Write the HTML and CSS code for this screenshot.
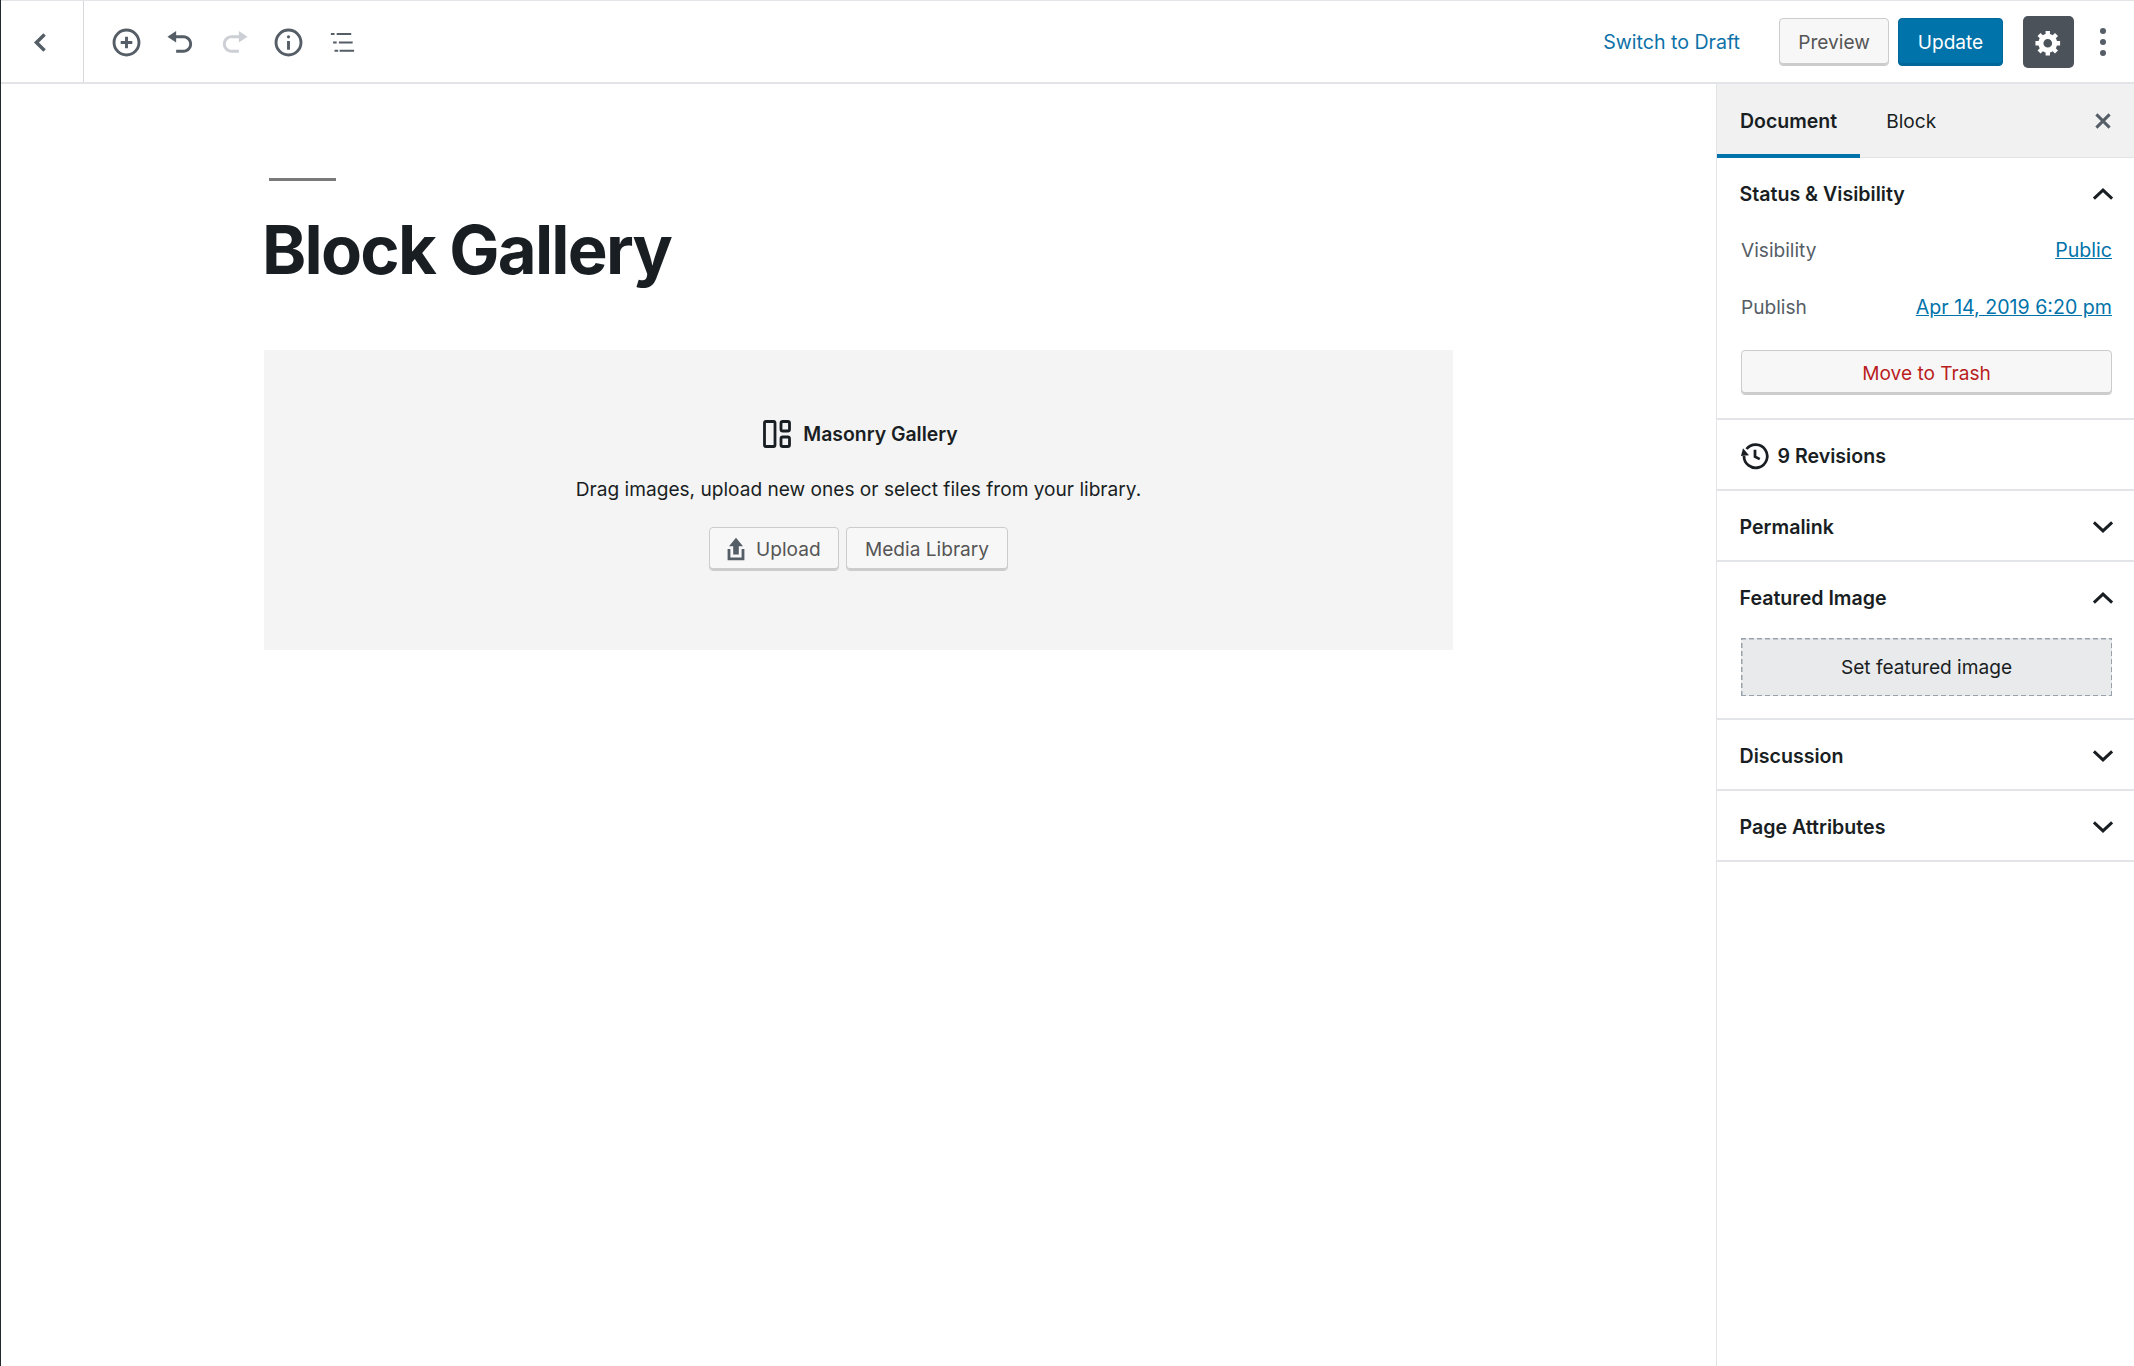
FILE: index.html
```html
<!DOCTYPE html>
<html lang="en">
<head>
<meta charset="utf-8">
<title>Block Gallery</title>
<link rel="stylesheet" href="styles.css">
</head>
<body>
<div class="app">
  <header class="topbar">
    <div class="back-cell">
      <svg class="icon" viewBox="0 0 20 20"><path class="stroke stroke-back" d="M12.800 4.500 7.200 10l5.600 5.500"/></svg>
    </div>
    <div class="tools">
      <span class="tool"><svg class="icon" viewBox="0 0 20 20"><circle class="stroke" cx="10" cy="10" r="8.600"/><path class="stroke" d="M10 6v8M6 10h8"/></svg></span>
      <span class="tool"><svg class="icon" viewBox="0 0 20 20"><path d="M12 5H7V2L1 6l6 4V7h5c2.200 0 4 1.800 4 4s-1.800 4-4 4H7v2h5c3.300 0 6-2.700 6-6s-2.700-6-6-6z"/></svg></span>
      <span class="tool tool-off"><svg class="icon" viewBox="0 0 20 20"><path d="M8 5h5V2l6 4-6 4V7H8c-2.200 0-4 1.800-4 4s1.800 4 4 4h5v2H8c-3.300 0-6-2.700-6-6s2.700-6 6-6z"/></svg></span>
      <span class="tool"><svg class="icon" viewBox="0 0 20 20"><circle class="stroke" cx="10" cy="10" r="8.600"/><path d="M9 9h2v6H9zM10 5a1.100 1.100 0 1 1 0 2.200A1.100 1.100 0 0 1 10 5z"/></svg></span>
      <span class="tool"><svg class="icon" viewBox="0 0 20 20"><path d="M2 3.500h2.500v1.400H2zM6 3.500h10v1.400H6zM3.500 9.300H6v1.400H3.500zM7.500 9.300h9.500v1.400H7.500zM4.500 15h2.500v1.400H4.500zM8 15h10v1.400H8z"/></svg></span>
    </div>
    <div class="actions">
      <a class="draft">Switch to Draft</a>
      <button class="btn btn-preview">Preview</button>
      <button class="btn btn-update">Update</button>
      <span class="gear"><svg class="gear-icon" viewBox="0 0 20 20"><path d="M18 12h-2.180c-.17.7-.44 1.350-.81 1.930l1.540 1.540-2.100 2.100-1.540-1.540c-.58.36-1.230.63-1.910.79V19H8v-2.180c-.68-.16-1.330-.43-1.910-.79l-1.540 1.540-2.120-2.120 1.540-1.540c-.36-.58-.63-1.230-.79-1.910H1V9.030h2.170c.16-.7.44-1.350.8-1.940L2.430 5.550l2.100-2.100 1.540 1.540c.58-.37 1.240-.64 1.930-.81V2h3v2.180c.68.16 1.330.43 1.910.79l1.540-1.540 2.120 2.120-1.540 1.540c.36.59.64 1.240.8 1.940H18V12zm-8.500 1.500c1.660 0 3-1.340 3-3s-1.340-3-3-3-3 1.340-3 3 1.340 3 3 3z" fill-rule="evenodd"/></svg></span>
      <span class="dots"><i></i><i></i><i></i></span>
    </div>
  </header>
  <div class="workspace">
    <main class="editor">
      <div class="post">
        <div class="title-rule"></div>
        <h1 class="title">Block Gallery</h1>
        <section class="placeholder">
          <div class="ph-head">
            <svg class="ph-icon" viewBox="0 0 28 28"><rect x="1.500" y="1.500" width="10.500" height="25" rx="1.500"/><rect x="18" y="1.500" width="8.500" height="9.500" rx="1.800"/><rect x="18" y="17" width="8.500" height="9.500" rx="1.800"/></svg>
            <span>Masonry Gallery</span>
          </div>
          <p class="ph-text">Drag images, upload new ones or select files from your library.</p>
          <div class="ph-buttons">
            <button class="btn btn-light btn-upload"><svg class="upload-icon" viewBox="0 0 20 20"><path d="M8 14V8H5l5-6 5 6h-3v6H8zm-4-4h2v6h8v-6h2v8H4z"/></svg>Upload</button>
            <button class="btn btn-light btn-media">Media Library</button>
          </div>
        </section>
      </div>
    </main>
    <aside class="sidebar">
      <div class="tabs">
        <span class="tab tab-active">Document</span>
        <span class="tab">Block</span>
        <svg class="close" viewBox="0 0 20 20"><path d="M4.500 4.500l11 11M15.500 4.500l-11 11"/></svg>
      </div>
      <section class="panel panel-status">
        <div class="panel-head"><span>Status &amp; Visibility</span><svg class="chev" viewBox="0 0 20 20"><path d="M3 13.500 10 7l7 6.500"/></svg></div>
        <div class="row row-first"><span class="row-label">Visibility</span><a class="row-link">Public</a></div>
        <div class="row"><span class="row-label">Publish</span><a class="row-link">Apr 14, 2019 6:20 pm</a></div>
        <button class="btn btn-light btn-trash">Move to Trash</button>
      </section>
      <section class="panel">
        <div class="panel-head panel-head-start">
          <svg class="history" viewBox="0 0 24 24"><path d="M5.200 6.400A9.300 9.300 0 1 1 3.200 12"/><path class="fill" d="M.8 12 7.200 11.300 2.400 5.800z"/><path d="M12 7v5.500l3.800 2"/></svg>
          <span>9 Revisions</span>
        </div>
      </section>
      <section class="panel"><div class="panel-head"><span>Permalink</span><svg class="chev" viewBox="0 0 20 20"><path d="M3 6.500 10 13l7-6.500"/></svg></div></section>
      <section class="panel panel-featured">
        <div class="panel-head"><span>Featured Image</span><svg class="chev" viewBox="0 0 20 20"><path d="M3 13.500 10 7l7 6.500"/></svg></div>
        <button class="set-image">Set featured image</button>
      </section>
      <section class="panel"><div class="panel-head"><span>Discussion</span><svg class="chev" viewBox="0 0 20 20"><path d="M3 6.500 10 13l7-6.500"/></svg></div></section>
      <section class="panel"><div class="panel-head"><span>Page Attributes</span><svg class="chev" viewBox="0 0 20 20"><path d="M3 6.500 10 13l7-6.500"/></svg></div></section>
    </aside>
  </div>
</div>
</body>
</html>
```
FILE: styles.css
```css
* { box-sizing: border-box; }
html, body { margin: 0; padding: 0; height: 100%; background: #fff; }
body { font-family: Inter, "Liberation Sans", sans-serif; font-size: 19.100px; color: #191e23; overflow: hidden; }
.app { height: 1366px; display: flex; flex-direction: column; border-left: 1px solid #23282d; }
.topbar { height: 84px; flex: none; display: flex; align-items: center; background: #fff; border-top: 1px solid #e2e4e7; border-bottom: 2px solid #e2e4e7; }
.back-cell { width: 83px; height: 81px; flex: none; display: flex; align-items: center; justify-content: center; padding-right: 3px; padding-top: 1px; border-right: 1px solid #d5d7da; }
.icon { width: 29px; height: 29px; fill: #555d66; display: block; }
.stroke { fill: none; stroke: #555d66; stroke-width: 2; }
.stroke-back { stroke-width: 2.400; }
.tools { display: flex; padding-left: 15px; padding-top: 1px; }
.tool { width: 54px; height: 54px; display: flex; align-items: center; justify-content: center; }
.tool-off .icon { fill: #ccd0d4; }
.actions { margin-left: auto; display: flex; align-items: center; padding-right: 28px; padding-top: 1px; }
.draft { color: #0d72a8; margin-right: 39px; font-size: 19.600px; }
.btn { font: inherit; height: 48px; padding: 0 18px; border-radius: 4px; border: 1.500px solid #ccc; }
.btn-preview { width: 110px; background: #f7f7f7; color: #555; box-shadow: inset 0 -2px 0 #ccc; }
.btn-update { width: 105px; margin-left: 9px; background: #0073aa; border-color: #006799; color: #fff; box-shadow: inset 0 -2px 0 #006799; }
.gear { width: 51px; height: 52px; margin-left: 20px; border-radius: 5px; background: #4b5259; display: flex; align-items: center; justify-content: center; }
.gear-icon { width: 29px; height: 29px; fill: #fff; display: block; }
.dots { display: flex; flex-direction: column; gap: 5px; margin-left: 26px; }
.dots i { display: block; width: 6px; height: 6px; border-radius: 50%; background: #555d66; }
.workspace { flex: 1; display: flex; min-height: 0; }
.editor { flex: 1; min-width: 0; padding: 94px 0 0 263px; }
.post { width: 1189px; }
.title-rule { width: 67px; height: 3px; margin-left: 5px; background: #7a7a7a; }
.title { margin: 24px 0 0 -2px; font-size: 67px; line-height: 90px; font-weight: 700; letter-spacing: -1.750px; color: #191e23; }
.placeholder { margin-top: 55px; height: 300px; background: #f4f4f4; display: flex; flex-direction: column; align-items: center; padding-top: 69px; }
.ph-head { display: flex; align-items: center; gap: 12px; padding-left: 4px; font-weight: 600; height: 30px; font-size: 19.400px; }
.ph-icon { width: 28px; height: 28px; fill: none; stroke: #191e23; stroke-width: 2.800; display: block; }
.ph-text { margin: 25px 0 0; line-height: 30px; }
.ph-buttons { display: flex; gap: 7px; margin-top: 23px; }
.btn-light { height: 44px; background: #f7f7f7; color: #555; box-shadow: inset 0 -2px 0 #ccc; }
.btn-upload { display: flex; align-items: center; gap: 6px; width: 130px; padding: 0 12px 0 12px; }
.btn-media { width: 162px; padding: 0; }
.upload-icon { width: 28px; height: 28px; fill: #555d66; display: block; flex: none; }
.sidebar { width: 418px; flex: none; border-left: 1.500px solid #e2e4e7; background: #fff; }
.tabs { height: 74px; display: flex; align-items: center; background: #f1f1f2; border-bottom: 1.500px solid #e2e4e7; }
.tab { height: 74px; padding: 0 23px 0 26px; line-height: 74px; }
.tab-active { font-weight: 600; font-size: 19.500px; padding: 0 23px; border-bottom: 4px solid #0073aa; }
.close { width: 24px; height: 24px; margin-left: auto; margin-right: 19px; fill: none; stroke: #555d66; stroke-width: 2.500; }
.panel { border-bottom: 2px solid #e2e4e7; }
.panel-head { height: 69px; padding: 2px 18px 0 22.500px; display: flex; align-items: center; justify-content: space-between; font-weight: 600; font-size: 19.600px; }
.panel-head-start { justify-content: flex-start; gap: 8px; }
.chev { width: 26px; height: 26px; fill: none; stroke: #191e23; stroke-width: 2.300; }
.history { width: 30px; height: 30px; fill: none; stroke: #191e23; stroke-width: 2.200; }
.history .fill { fill: #191e23; stroke: none; }
.row { display: flex; justify-content: space-between; padding: 0 22px 0 24px; height: 57px; line-height: 32px; }
.row-first { margin-top: 7px; }
.row-label { color: #555d66; }
.row-link { color: #0073aa; text-decoration: underline; font-size: 19.600px; }
.panel-status { height: 262px; }
.btn-trash { display: block; width: 371px; height: 45px; margin: 2px 0 0 24px; color: #b91d1d; }
.panel-featured { height: 158px; }
.set-image { display: block; width: 371px; height: 58px; margin: 7px 0 0 24px; font: inherit; color: #191e23; border: 0;
  background-color: #e9eaeb;
  background-image:
    repeating-linear-gradient(90deg, #9aa2ab 0 5px, transparent 5px 8px),
    repeating-linear-gradient(90deg, #9aa2ab 0 5px, transparent 5px 8px),
    repeating-linear-gradient(0deg, #9aa2ab 0 5px, transparent 5px 8px),
    repeating-linear-gradient(0deg, #9aa2ab 0 5px, transparent 5px 8px);
  background-size: 100% 1.500px, 100% 1.500px, 1.500px 100%, 1.500px 100%;
  background-position: 0 0, 0 100%, 0 0, 100% 0;
  background-repeat: no-repeat;
}
```
